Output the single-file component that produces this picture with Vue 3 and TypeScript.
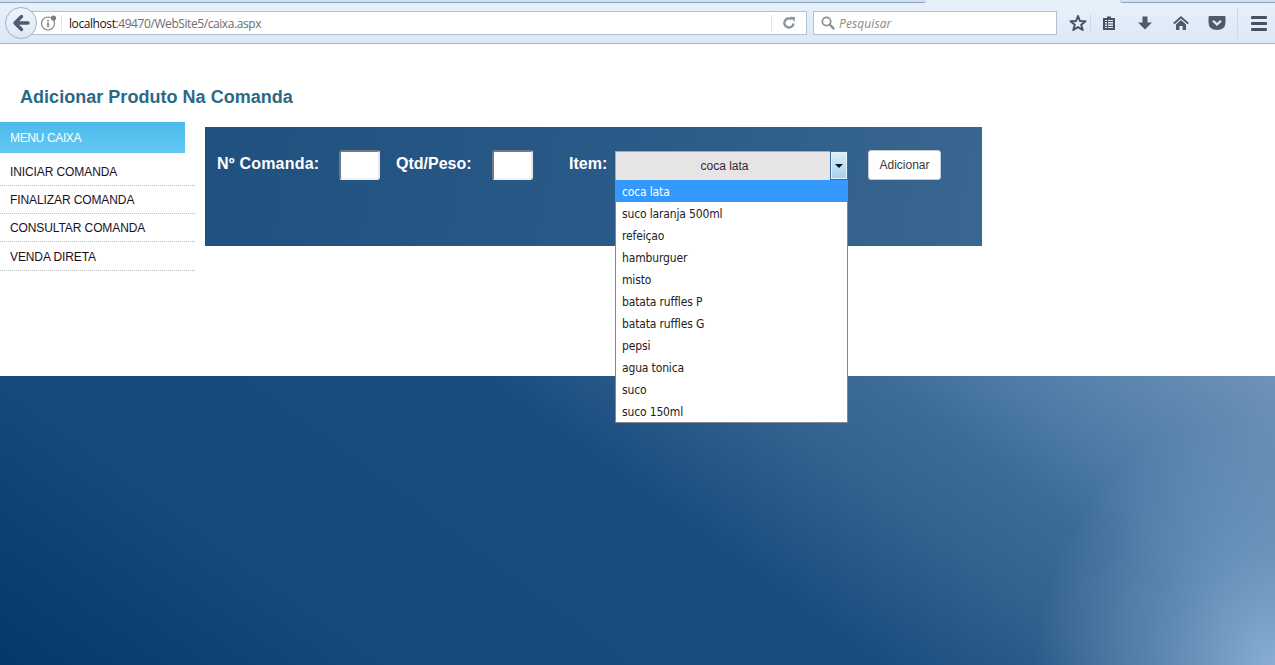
<script setup lang="ts">
const menu: string[] = ['INICIAR COMANDA', 'FINALIZAR COMANDA', 'CONSULTAR COMANDA', 'VENDA DIRETA']
const items: string[] = ['coca lata', 'suco laranja 500ml', 'refeiçao', 'hamburguer', 'misto', 'batata ruffles P', 'batata ruffles G', 'pepsi', 'agua tonica', 'suco', 'suco 150ml']
</script>

<template>
  <div class="page">
    <header class="chrome">
      <div class="tabstrip"><span class="tab t1"></span><span class="tab t2"></span></div>
      <div class="toolbar">
        <button class="back">
          <svg width="18" height="18" viewBox="0 0 18 18"><path d="M9.5 2.5 L3 9 L9.5 15.5 M3.5 9 H16" fill="none" stroke="#4d5c6e" stroke-width="3.4" stroke-linejoin="round" stroke-linecap="round" /></svg>
        </button>
        <div class="url">
          <svg class="info" width="20" height="18" viewBox="0 0 20 18">
            <circle cx="8" cy="9.5" r="6.5" fill="none" stroke="#7b7f85" stroke-width="1.2" />
            <rect x="7.2" y="8.5" width="1.6" height="4.5" fill="#6f7378" />
            <rect x="7.2" y="5.8" width="1.6" height="1.6" fill="#6f7378" />
            <circle cx="13.5" cy="4" r="2.6" fill="#7b7f85" />
          </svg>
          <span class="sep"></span>
          <span class="addr"><b>localhost</b>:49470/WebSite5/caixa.aspx</span>
          <span class="sep reload-sep"></span>
          <svg class="reload" width="14" height="14" viewBox="0 0 14 14"><path d="M11.5 7.5 A4.6 4.6 0 1 1 9.6 3.2" fill="none" stroke="#8a949f" stroke-width="2.4" /><path d="M8 0.8 L13 1 L12.6 6 Z" fill="#8a949f" /></svg>
        </div>
        <div class="search">
          <svg width="16" height="16" viewBox="0 0 16 16"><circle cx="6.5" cy="6.5" r="4.2" fill="none" stroke="#8c9299" stroke-width="1.8" /><path d="M9.7 9.7 L14.2 14.2" stroke="#8c9299" stroke-width="2.4" /></svg>
          <span>Pesquisar</span>
        </div>
        <div class="tools">
          <svg class="star" width="18" height="18" viewBox="0 0 18 18"><path d="M9 2 L11 7 L16.5 7.3 L12.2 10.8 L13.7 16 L9 13.1 L4.3 16 L5.8 10.8 L1.5 7.3 L7 7 Z" fill="none" stroke="#46525f" stroke-width="2" stroke-linejoin="round" /></svg>
          <span class="tool-sep"></span>
          <svg class="list" width="16" height="16" viewBox="0 0 16 16"><path d="M6 1.5 H10 V3 H14 V15 H2 V3 H6 Z" fill="#46525f" /><rect x="4" y="5" width="8" height="8" fill="#dfeaf6" /><path d="M4 6.5 H12 M4 9 H12 M4 11.5 H12 M6.5 5 V13" stroke="#46525f" stroke-width="1" /></svg>
          <svg class="down" width="16" height="16" viewBox="0 0 16 16"><path d="M5.5 1.5 H10.5 V7.5 H15 L8 14.5 L1 7.5 H5.5 Z" fill="#4d5a68" /></svg>
          <svg class="home" width="18" height="16" viewBox="0 0 18 16"><path d="M9 1 L17 8 L15.4 9.2 L9 3.6 L2.6 9.2 L1 8 Z" fill="#4d5a68" /><path d="M9 5 L14 9.4 V15 H10.6 V11 H7.4 V15 H4 V9.4 Z" fill="#4d5a68" /></svg>
          <svg class="pocket" width="18" height="16" viewBox="0 0 18 16"><path d="M1.5 1 H16.5 Q17.5 1 17.5 2 V7 Q17.5 15 9 15 Q0.5 15 0.5 7 V2 Q0.5 1 1.5 1 Z" fill="#4d5a68" /><path d="M5 5.8 L9 9.6 L13 5.8" fill="none" stroke="#e3edf8" stroke-width="2.2" /></svg>
          <span class="tool-sep menu-sep"></span>
          <div class="burger"><i></i><i></i><i></i></div>
        </div>
      </div>
    </header>

    <main class="content">
      <h1>Adicionar Produto Na Comanda</h1>
      <div class="columns">
        <nav class="side">
          <div class="side-head">MENU CAIXA</div>
          <ul>
            <li v-for="m in menu" :key="m">{{ m }}</li>
          </ul>
        </nav>
        <section class="panel">
          <label class="l1">Nº Comanda:</label>
          <span class="field f1"></span>
          <label class="l2">Qtd/Peso:</label>
          <span class="field f2"></span>
          <label class="l3">Item:</label>
          <div class="select">
            <div class="value">coca lata</div>
            <div class="arrow"><i></i></div>
            <ul class="dropdown">
              <li v-for="(it, i) in items" :key="it" :class="{ active: i === 0 }">{{ it }}</li>
            </ul>
          </div>
          <button class="add">Adicionar</button>
        </section>
      </div>
    </main>

    <footer class="foot"></footer>
  </div>
</template>

<style>
html, body { margin: 0; padding: 0; background: #fff; overflow: hidden; }
</style>

<style scoped>
.page { width: 1275px; height: 665px; display: flex; flex-direction: column; font-family: "Liberation Sans", Arial, sans-serif; overflow: hidden; }
.chrome { height: 44px; flex: none; box-sizing: border-box; border-bottom: 1px solid #a9b8c9; background: linear-gradient(#e8f1fb, #dde8f6); position: relative; }
.tabstrip { height: 3px; display: flex; justify-content: space-between; }
.tab { display: block; height: 3px; background: #d3e1ef; border-bottom: 1px solid #8ba3bf; box-sizing: border-box; }
.t1 { width: 926px; border-bottom-right-radius: 6px; }
.t2 { width: 155px; border-bottom-left-radius: 6px; }
.toolbar { display: flex; align-items: center; height: 40px; position: relative; }
.back { position: absolute; left: 5px; top: 4px; width: 32px; height: 32px; box-sizing: border-box; border-radius: 50%; border: 1px solid #a3b2c4; background: linear-gradient(#eef4fb, #dfe9f6); padding: 0; display: flex; align-items: center; justify-content: center; z-index: 2; }
.url { margin-left: 24px; width: 783px; height: 24px; box-sizing: border-box; border: 1px solid #b4c1d0; background: #fff; display: flex; align-items: center; padding-left: 16px; }
.info { flex: none; margin-right: 1px; margin-left: -1px; }
.sep { width: 1px; height: 16px; background: #dfe3e8; flex: none; }
.addr { margin-left: 7px; font: 12px "Open Sans", "Liberation Sans", sans-serif; color: #6d6d6d; flex: 1; letter-spacing: -0.42px; }
.addr b { font-weight: 400; color: #1d1020; }
.reload { margin: 0 10px 0 10px; flex: none; }
.search { margin-left: 6px; width: 244px; height: 24px; box-sizing: border-box; border: 1px solid #b4c1d0; background: #fff; display: flex; align-items: center; padding-left: 6px; gap: 3px; font: italic 12px "Open Sans", "Liberation Sans", sans-serif; color: #8a8a8a; letter-spacing: 0.1px; }
.tools { display: flex; align-items: center; flex: 1; position: relative; height: 30px; }
.tools svg, .tools .burger, .tool-sep { position: absolute; }
.star { left: 12px; top: 6px; }
.tool-sep { width: 1px; height: 18px; background: #cdd9e6; left: 33px; top: 6px; }
.list { left: 44px; top: 7px; }
.down { left: 80px; top: 7px; }
.home { left: 115px; top: 7px; }
.pocket { left: 151px; top: 7px; }
.menu-sep { left: 180px; top: 0; height: 30px; }
.burger { left: 194px; top: 8px; width: 16px; display: flex; flex-direction: column; gap: 3px; }
.burger i { display: block; height: 3px; background: #46525f; border-radius: 1px; }

.content { height: 332px; flex: none; position: relative; box-sizing: border-box; padding-top: 42px; background: #fff; }
h1 { margin: 0 0 0 20px; font-size: 18px; line-height: 22px; font-weight: 700; color: #2b6a86; letter-spacing: 0.03px; }
.columns { display: flex; margin-top: 14px; }
.side { width: 195px; flex: none; }
.side-head { width: 185px; height: 31px; box-sizing: border-box; padding-left: 10px; line-height: 32px; color: #fff; font-size: 12px; background: linear-gradient(#4cbbeb, #62c9f5); letter-spacing: -0.35px; }
.side ul { list-style: none; margin: 5px 0 0; padding: 0; }
.side li { height: 28px; box-sizing: border-box; padding-left: 10px; line-height: 28px; font-size: 12px; color: #1c0f24; border-bottom: 1px dotted #bdbdbd; letter-spacing: -0.1px; }
.side li:last-child { height: 29px; line-height: 31px; }
.panel { margin: 5px 0 0 10px; width: 777px; height: 119px; position: relative; background: linear-gradient(100deg, #20507f 0%, #2a5a87 55%, #3a6791 100%); }
.panel label { position: absolute; top: 27px; font-size: 16px; line-height: 20px; font-weight: 700; color: #fff; }
.l1 { left: 12px; letter-spacing: 0.2px; }
.l2 { left: 191px; }
.l3 { left: 364px; }
.field { position: absolute; top: 23px; height: 30px; width: 41px; box-sizing: border-box; background: #fff; border: 2px solid #6f7a86; border-bottom-color: #f2f2f2; border-right-color: #e8e8e8; border-radius: 3px; }
.f1 { left: 134px; }
.f2 { left: 287px; }
.select { position: absolute; left: 410px; top: 24px; width: 233px; }
.value { height: 29px; box-sizing: border-box; border: 1px solid #a9a9a9; border-bottom: 0; background: #e6e4e4; text-align: center; padding-right: 14px; line-height: 28px; font-size: 12px; color: #332a33; }
.arrow { position: absolute; right: 0; top: 0; width: 18px; height: 29px; box-sizing: border-box; border: 1px solid #3f6d96; box-shadow: inset 0 0 0 1px #e4f1fb; background: linear-gradient(#dbeefa, #a3d0ef); display: flex; align-items: center; justify-content: center; }
.arrow i { width: 0; height: 0; border: 4px solid transparent; border-top-color: #111; border-bottom: 0; }
.dropdown { position: absolute; left: 0; top: 29px; width: 233px; box-sizing: border-box; list-style: none; margin: 0; padding: 0; background: #fff; border: 1px solid #7f8a96; border-top: 0; z-index: 3; }
.dropdown li { height: 22px; padding-left: 6px; font: 12px/24px "DejaVu Sans Condensed", "DejaVu Sans", sans-serif; font-stretch: condensed; color: #222; letter-spacing: -0.15px; }
.dropdown li.active { background: #3399ff; color: #fff; }
.add { position: absolute; left: 663px; top: 23px; width: 73px; height: 30px; box-sizing: border-box; background: #fff; border: 1px solid #c4ccd4; border-radius: 3px; font: 12px "Liberation Sans", sans-serif; color: #3a3a3a; padding: 0; }

.foot { flex: 1; background: radial-gradient(ellipse 240px 260px at 100% 100%, rgba(140,178,214,0.95) 0%, rgba(125,165,200,0.55) 45%, rgba(110,150,190,0) 100%), linear-gradient(36deg, #053769 0%, #164a7c 24%, #184b7e 52%, #34628f 67%, #3d6b98 76%, #4d7ba6 83.5%, #6f93b8 100%); }
</style>
